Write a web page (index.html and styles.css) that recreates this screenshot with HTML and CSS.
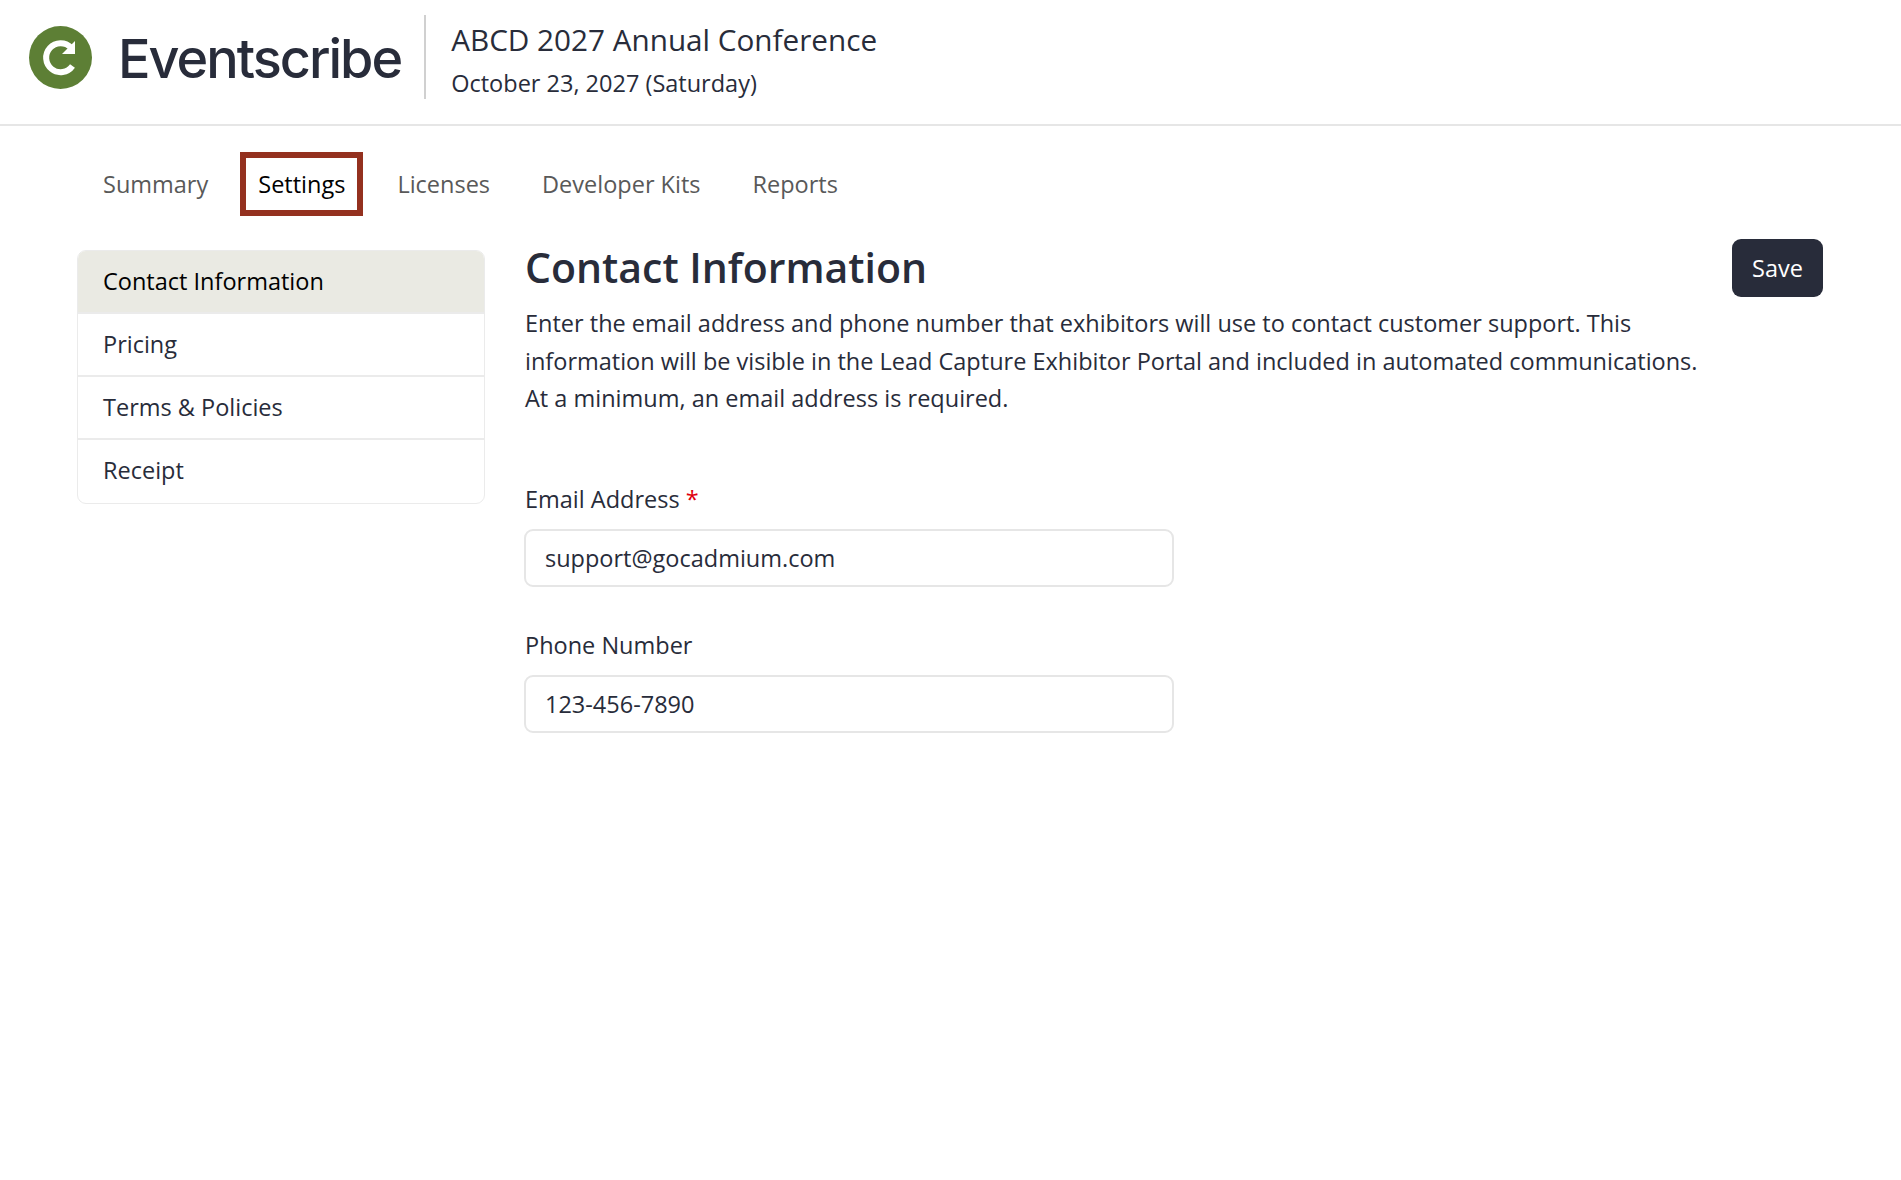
FILE: index.html
```html
<!DOCTYPE html>
<html lang="en">
  <head>
    <meta charset="UTF-8" />
    <meta name="viewport" content="width=device-width, initial-scale=1.0" />
    <title>Eventscribe - Settings</title>
    <link rel="stylesheet" href="styles.css">
  </head>
  <body>
    <header class="topBar">
      <div class="brand">
        <svg class="brandIcon" viewBox="0 0 63 63" aria-hidden="true">
          <circle cx="31.5" cy="31.5" r="31.5" fill="#5d7f35" />
          <path d="M42 21.5A14.5 14.5 0 1 0 43.5 40" fill="none" stroke="#fff" stroke-width="6" />
          <path d="M46 15V28H33z" fill="#fff" />
        </svg>
        <span class="brandName">Eventscribe</span>
      </div>
      <div class="eventInfo">
        <div class="eventName">ABCD 2027 Annual Conference</div>
        <div class="eventDate">October 23, 2027 (Saturday)</div>
      </div>
    </header>

    <div class="page">
      <nav class="tabs">
        <a class="tab" href="#">Summary</a>
        <a class="tab active" href="#">Settings</a>
        <a class="tab" href="#">Licenses</a>
        <a class="tab" href="#">Developer Kits</a>
        <a class="tab" href="#">Reports</a>
      </nav>

      <div class="columns">
        <ul class="sideMenu">
          <li class="sideItem selected">Contact Information</li>
          <li class="sideItem">Pricing</li>
          <li class="sideItem">Terms &amp; Policies</li>
          <li class="sideItem">Receipt</li>
        </ul>

        <main class="content">
          <div class="contentHead">
            <div class="intro">
              <h1>Contact Information</h1>
              <p>Enter the email address and phone number that exhibitors will use to contact customer support. This information will be visible in the Lead Capture Exhibitor Portal and included in automated communications. At a minimum, an email address is required.</p>
            </div>
            <button class="saveBtn" type="button">Save</button>
          </div>

          <form class="contactForm">
            <div class="field">
              <label for="email">Email Address <span class="required">*</span></label>
              <input type="text" id="email" value="support@gocadmium.com" />
            </div>
            <div class="field">
              <label for="phone">Phone Number</label>
              <input type="text" id="phone" value="123-456-7890" />
            </div>
          </form>
        </main>
      </div>
    </div>
  </body>
</html>
```

FILE: styles.css
```css
* {
  box-sizing: border-box;
}

body {
  margin: 0;
  background-color: #fff;
  color: #282c3a;
  font-family: "Open Sans", "Noto Sans", sans-serif;
  font-size: 23.500px;
  line-height: 1.55;
}

.topBar {
  display: flex;
  align-items: center;
  height: 126px;
  padding: 0 0 10px 29px;
  border-bottom: 2px solid #e6e6e6;
}

.brand {
  display: flex;
  align-items: center;
  gap: 26px;
  height: 84px;
  padding-right: 23px;
  border-right: 2px solid #d0d0d0;
}

.brandIcon {
  width: 63px;
  height: 63px;
}

.brandName {
  position: relative;
  top: 2px;
  color: #282c3a;
  font-family: "Inter", sans-serif;
  font-size: 54px;
  font-weight: 500;
  letter-spacing: -2px;
  line-height: 1;
}

.eventInfo {
  padding-left: 25px;
}

.eventName {
  font-size: 29.700px;
  line-height: 52px;
}

.eventDate {
  font-size: 23.500px;
  line-height: 34px;
}

.page {
  padding: 26px 78px 0 77px;
}

.tabs {
  display: flex;
  align-items: center;
  height: 64px;
}

.tab {
  padding: 0 26px;
  color: #595959;
  text-decoration: none;
}

.tab.active {
  margin: 0 8px 0 6px;
  padding: 0 12px;
  border: 6px solid #94311f;
  color: #000;
  line-height: 52px;
}

.columns {
  display: flex;
  gap: 40px;
  margin-top: 34px;
}

.sideMenu {
  flex: 0 0 408px;
  align-self: flex-start;
  margin: 0;
  padding: 0;
  list-style: none;
  border: 1.500px solid #ebebeb;
  border-radius: 9px;
  overflow: hidden;
}

.sideItem {
  height: 63px;
  padding: 0 25px;
  line-height: 61px;
  border-bottom: 2px solid #ebebeb;
}

.sideItem:last-child {
  border-bottom: 0;
}

.sideItem.selected {
  background-color: #eaeae3;
  color: #000;
}

.content {
  flex: 1;
}

.contentHead {
  display: flex;
  align-items: flex-start;
  gap: 24px;
}

.intro {
  flex: 1;
}

h1 {
  margin: -12px 0 0;
  font-size: 41px;
  font-weight: 600;
  line-height: 58px;
}

.intro p {
  margin: 9px 0 0;
  line-height: 37.500px;
}

.saveBtn {
  flex: none;
  width: 91px;
  height: 58px;
  margin-top: -11px;
  border: none;
  border-radius: 9px;
  background-color: #282c3a;
  color: #fff;
  font-family: inherit;
  font-size: 23.500px;
}

.contactForm {
  margin-top: 63px;
  width: 650px;
}

.field {
  margin-bottom: 40px;
}

.field label {
  display: block;
  line-height: 36px;
  margin-bottom: 12px;
}

.required {
  color: #e0000f;
}

.field input {
  display: block;
  width: 100%;
  height: 58px;
  margin-left: -1px;
  padding: 0 19px;
  border: 2px solid #e6e6e6;
  border-radius: 9px;
  color: #282c3a;
  font-family: inherit;
  font-size: 23.500px;
}
```
